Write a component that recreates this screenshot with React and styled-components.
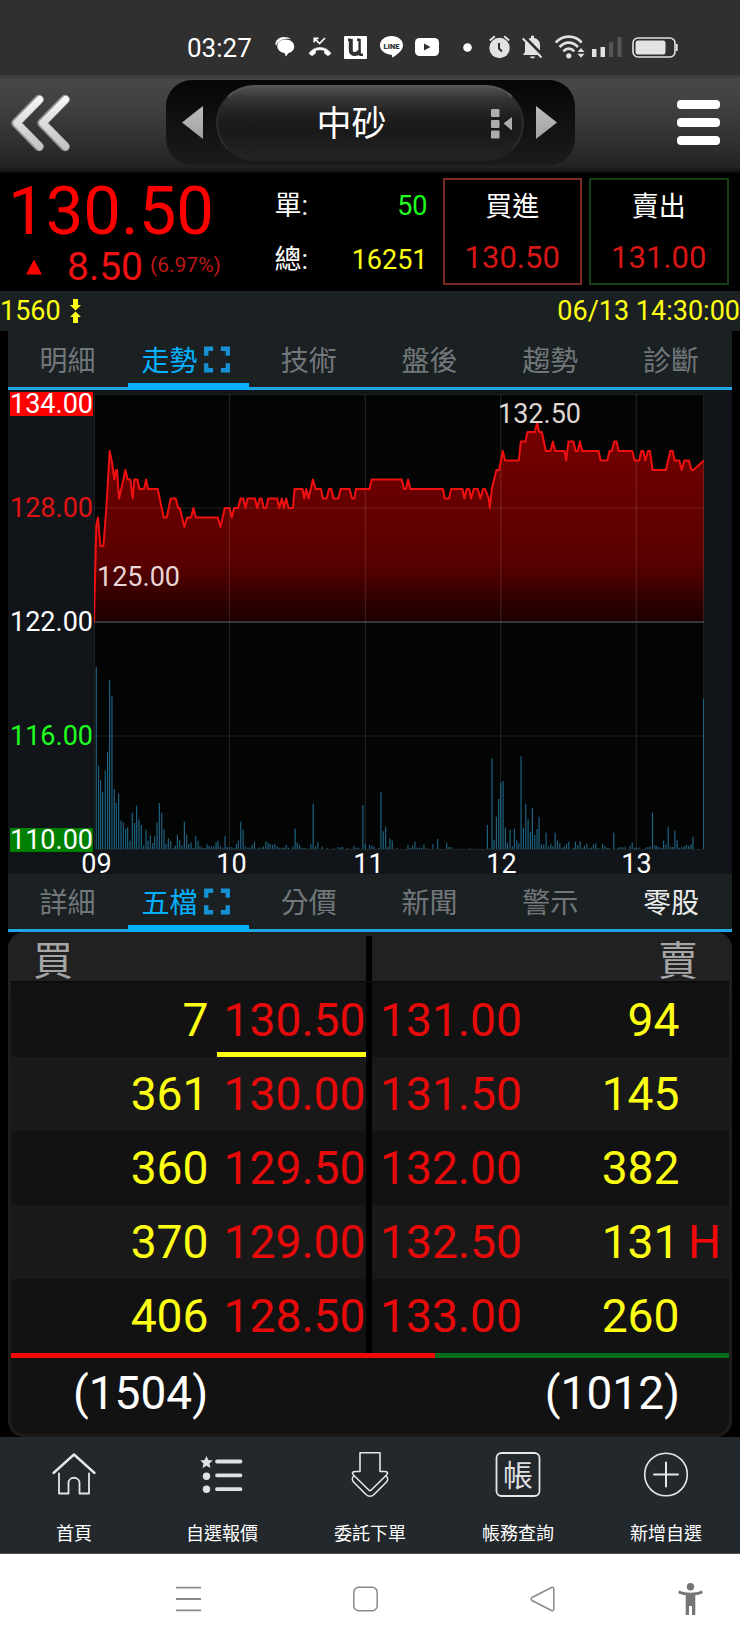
import React from "react";
import styled, { createGlobalStyle } from "styled-components";

const COLORS = {
  up: "#ff0000",
  price: "#e60a0a",
  down: "#1fff1f",
  volume: "#ffff14",
  accent: "#05b1ff",
  panel: "#1b2123",
};

const UNIT = 57; // chart units for one dollar
const PLOT_W = 1828;
const PLOT_H = 24 * UNIT;

// [x, price]
const PRICES = [
  [0, 122], [4, 125], [7, 127.1], [12, 127.5], [19, 126], [28, 126], [37, 128],
  [47, 131], [54, 130.4], [61, 129.5], [66, 130], [69, 130], [75, 128.5], [83, 129.1], [94, 130],
  [101, 129.5], [109, 129.5], [116, 128.5], [121, 129.5], [130, 129.5],
  [136, 129], [150, 129], [156, 129.5], [162, 129], [191, 129], [209, 127.5],
  [218, 127.5], [230, 128.5], [245, 128.5], [252, 128], [257, 128],
  [271, 127], [279, 127.5], [291, 127.5], [298, 128], [305, 127.5],
  [371, 127.5], [379, 127], [392, 128], [406, 128], [413, 127.5], [420, 128],
  [432, 128], [439, 128.5], [447, 128.5], [454, 128], [460, 128.5],
  [482, 128.5], [489, 128], [496, 128.5], [502, 128.5], [509, 128],
  [516, 128], [522, 128.5], [549, 128.5], [555, 128], [563, 128.5],
  [569, 128], [576, 128.5], [583, 128], [596, 128], [601, 129], [625, 129],
  [630, 128.5], [636, 129], [643, 128.5], [656, 129.5], [664, 129],
  [680, 129], [686, 128.5], [697, 128.5], [704, 129], [711, 129],
  [718, 128.5], [732, 128.5], [739, 129], [766, 129], [773, 128.5],
  [780, 128.5], [785, 129], [826, 129], [832, 129.5], [922, 129.5],
  [929, 129], [935, 129], [941, 129.5], [948, 129], [1046, 129],
  [1051, 128.5], [1064, 128.5], [1070, 129], [1104, 129], [1110, 128.5],
  [1117, 129], [1124, 129], [1130, 128.5], [1138, 129], [1150, 129],
  [1158, 128.5], [1166, 129], [1172, 129], [1183, 128.5], [1186, 128], [1192, 129],
  [1206, 130], [1214, 130], [1225, 131], [1232, 130.5], [1273, 130.5],
  [1279, 131.5], [1293, 131.5], [1299, 132], [1321, 132], [1328, 132.5],
  [1334, 132], [1342, 132], [1354, 131], [1368, 131], [1375, 131.5],
  [1382, 131], [1410, 131], [1415, 130.5], [1422, 131.5], [1437, 131.5],
  [1443, 131], [1450, 131], [1456, 131.5], [1463, 131], [1512, 131],
  [1518, 130.5], [1538, 130.5], [1545, 131], [1552, 131], [1559, 131.5],
  [1566, 131.5], [1572, 131], [1613, 131], [1620, 130.5], [1634, 130.5],
  [1640, 131], [1646, 131], [1652, 130.5], [1660, 131], [1666, 131],
  [1674, 130], [1714, 130], [1727, 131], [1734, 131], [1740, 130.5],
  [1754, 130.5], [1761, 130], [1769, 130.5], [1783, 130.5], [1790, 130],
  [1796, 130], [1828, 130.5],
];

// [x, bar height]
const VOLUMES = [
  [7, 546], [14, 250], [20, 206], [26, 170], [34, 236], [41, 292], [47, 506],
  [54, 458], [61, 180], [67, 138], [74, 166], [81, 85], [88, 80], [95, 60],
  [101, 66], [108, 25], [115, 109], [122, 78], [128, 130], [135, 88],
  [142, 72], [149, 11], [156, 58], [162, 25], [169, 41], [176, 18], [182, 38],
  [189, 80], [196, 138], [203, 109], [210, 59], [216, 16], [223, 32],
  [230, 24], [237, 2], [244, 10], [250, 43], [257, 26], [264, 11], [271, 82],
  [278, 43], [284, 15], [291, 20], [298, 4], [305, 39], [312, 25], [318, 8],
  [325, 4], [332, 3], [339, 14], [345, 9], [352, 7], [359, 9], [366, 20],
  [372, 25], [379, 8], [386, 4], [393, 40], [399, 6], [406, 6], [413, 6],
  [420, 3], [427, 15], [433, 26], [440, 82], [447, 58], [454, 8], [461, 4],
  [467, 4], [474, 13], [481, 22], [494, 4], [501, 4], [508, 8], [515, 23],
  [522, 19], [528, 15], [535, 13], [542, 15], [549, 8], [556, 4], [563, 4],
  [569, 4], [576, 12], [583, 4], [596, 8], [603, 61], [609, 19], [616, 13],
  [623, 4], [630, 3], [637, 2], [650, 15], [657, 136], [664, 8], [671, 21],
  [684, 7], [698, 3], [718, 2], [732, 6], [739, 5], [745, 6], [759, 3],
  [779, 9], [786, 4], [793, 4], [806, 132], [813, 15], [826, 13], [833, 11],
  [839, 7], [853, 3], [860, 170], [867, 53], [874, 67], [881, 6], [887, 31],
  [894, 25], [908, 2], [941, 13], [948, 3], [955, 10], [962, 22], [969, 4],
  [975, 4], [982, 4], [989, 14], [996, 2], [1016, 15], [1030, 30],
  [1057, 19], [1064, 6], [1071, 6], [1126, 2], [1179, 72], [1186, 2],
  [1193, 272], [1199, 28], [1206, 97], [1213, 150], [1219, 199], [1226, 204],
  [1233, 64], [1239, 19], [1247, 58], [1254, 8], [1260, 61], [1267, 26],
  [1273, 17], [1280, 278], [1287, 64], [1294, 135], [1301, 89], [1308, 52],
  [1314, 124], [1321, 42], [1328, 60], [1334, 97], [1341, 14], [1348, 14],
  [1355, 49], [1362, 8], [1369, 16], [1375, 8], [1382, 49], [1389, 25],
  [1396, 17], [1403, 4], [1410, 8], [1416, 15], [1423, 22], [1437, 4],
  [1443, 22], [1450, 12], [1457, 23], [1464, 4], [1470, 10], [1477, 16],
  [1484, 2], [1491, 5], [1497, 14], [1504, 17], [1511, 3], [1524, 16],
  [1531, 9], [1538, 4], [1544, 3], [1558, 49], [1571, 4], [1578, 6],
  [1585, 5], [1592, 7], [1606, 10], [1613, 20], [1620, 4], [1626, 4],
  [1633, 4], [1653, 4], [1660, 6], [1667, 7], [1674, 109], [1681, 10],
  [1687, 9], [1694, 6], [1701, 3], [1707, 25], [1714, 14], [1721, 67],
  [1728, 7], [1734, 6], [1741, 55], [1748, 26], [1755, 4], [1762, 6],
  [1769, 8], [1775, 13], [1782, 10], [1789, 14], [1795, 37], [1827, 451],
];

const BIDS = [
  { price: "130.50", qty: "7", last: true },
  { price: "130.00", qty: "361" },
  { price: "129.50", qty: "360" },
  { price: "129.00", qty: "370" },
  { price: "128.50", qty: "406" },
];

const ASKS = [
  { price: "131.00", qty: "94" },
  { price: "131.50", qty: "145" },
  { price: "132.00", qty: "382" },
  { price: "132.50", qty: "131", mark: "H" },
  { price: "133.00", qty: "260" },
];

const StatusIcons = () => (
  <>
    <Glyph $left={275} width="20" height="20" viewBox="0 0 20 20" fill="#fff">
      <path d="M.5 8C0 3 4.500 0 9 0c3 0 5.500.8 7 2.300C9.500.8 3.500 3 1.300 8.500z" />
      <path d="M10.500 2.600c5 0 8.700 2.800 8.700 6.900 0 3.500-2.500 5.700-5.600 6.500L10.800 19.500 9.500 16C5.500 15.500 2.300 13 2.300 9.300 2.300 5.300 6 2.600 10.500 2.600z" />
    </Glyph>
    <Glyph $left={308} width="24" height="20" viewBox="0 0 24 20">
      <path d="M1 16.500C6 8.500 18 8.500 23 16.500L20 18.800 16.500 16.300V13.500C13.500 12.600 10.500 12.600 7.500 13.500V16.300L4 18.800z" fill="#fff" stroke="#fff" strokeWidth=".6" strokeLinejoin="round" />
      <path d="M6.300 5.500V1.300H10.500M7 2l4.500 4.500L17 1" fill="none" stroke="#fff" strokeWidth="1.700" />
    </Glyph>
    <Glyph $left={344} width="23" height="23" viewBox="0 0 23 23">
      <rect width="23" height="23" rx="1" fill="#fff" />
      <path d="M6.800 3V14.500C6.800 19.500 14.800 19 14.800 14.500" fill="none" stroke="#303030" strokeWidth="4" />
      <path d="M15.600 3V19.500M4 3.800H7M13 3.800H16M15.500 18.800H19" fill="none" stroke="#303030" strokeWidth="2.400" />
    </Glyph>
    <Glyph $left={380} width="23" height="22" viewBox="0 0 23 22">
      <path d="M11.500 0C18 0 23 4 23 9.300c0 5-5 9-11 12.500.3-1.500.4-2.500-.6-3C5 18.500 0 14.500 0 9.300 0 4 5 0 11.500 0z" fill="#fff" />
      <text x="11.500" y="12.500" fontSize="7.500" fontWeight="900" fontFamily="Roboto, sans-serif" textAnchor="middle" fill="#303030">LINE</text>
    </Glyph>
    <Glyph $left={415} width="24" height="18" viewBox="0 0 24 18">
      <rect width="24" height="18" rx="4.500" fill="#fff" />
      <path d="M9 5.500L15.500 9 9 12.500z" fill="#303030" />
    </Glyph>
    <Glyph $left={463} width="9" height="9" viewBox="0 0 9 9">
      <circle cx="4.500" cy="4.500" r="4.300" fill="#fff" />
    </Glyph>
    <Glyph $left={489} width="21" height="24" viewBox="0 0 21 24">
      <circle cx="10.500" cy="13" r="10.200" fill="#e2e2e2" />
      <path d="M.8 5.500L5.800 1.200M20.200 5.500L15.200 1.200" stroke="#e2e2e2" strokeWidth="2" />
      <path d="M10 8v5.500l3 3" fill="none" stroke="#303030" strokeWidth="2" />
    </Glyph>
    <Glyph $left={522} width="21" height="24" viewBox="0 0 21 24">
      <path d="M3 17V10C3 6 5.500 3.500 9 3V.8h3V3c3.500.5 6 3 6 7v7l2 3H.8z" fill="#e2e2e2" />
      <path d="M8 21.500h5c-.5 2.500-4.500 2.500-5 0z" fill="#e2e2e2" />
      <path d="M2.500 2L21 20.500" stroke="#303030" strokeWidth="3" />
      <path d="M.8 3.500L19.500 22.500" stroke="#e2e2e2" strokeWidth="2" />
    </Glyph>
    <Glyph $left={555} width="30" height="24" viewBox="0 0 30 24">
      <g fill="none" stroke="#e2e2e2" strokeWidth="2.600">
        <path d="M.8 7.500C8-.3 19.500-.3 26.700 7.500" />
        <path d="M4.500 12c5.500-5.800 13-5.800 18.500 0" />
        <path d="M8.300 16.300c3.500-3.600 7.500-3.600 11 0" />
      </g>
      <circle cx="13.800" cy="20.800" r="2.600" fill="#e2e2e2" />
      <path d="M22.500 17l3.500-4 3.500 4zM22.500 18.800h7L26 22.800z" fill="#e2e2e2" />
    </Glyph>
    <Glyph $left={592} width="30" height="20" viewBox="0 0 30 20">
      <path d="M0 12h4.500v8H0zM8.500 10H13v10H8.500z" fill="#e2e2e2" />
      <path d="M17 5h4.200v15H17zM25.500 0h4v20h-4z" fill="#555" />
    </Glyph>
    <Glyph $left={632} width="46" height="21" viewBox="0 0 46 21">
      <rect x="1" y="1" width="42" height="19" rx="5" fill="none" stroke="#e2e2e2" strokeWidth="1.600" />
      <rect x="3.500" y="3.500" width="30" height="14" rx="2.500" fill="#e2e2e2" />
      <path d="M44.800 7v7" stroke="#e2e2e2" strokeWidth="1.800" />
    </Glyph>
  </>
);

const ExpandIcon = () => (
  <svg width="26" height="27" viewBox="0 0 27 27" fill="none" stroke="#1691d4" strokeWidth="4.500">
    <path d="M2.300 9.500V2.300h7.200M17.500 2.300h7.200v7.200M24.700 17.500v7.200h-7.200M9.500 24.700H2.300v-7.200" />
  </svg>
);

const TabBar = ({ items, active, bright, height }) => (
  <Tabs $height={height}>
    {items.map((item) => (
      <Tab key={item} $active={item === active} $bright={item === bright}>
        <span>{item}</span>
        {item === active && <ExpandIcon />}
      </Tab>
    ))}
  </Tabs>
);

const TrendChart = () => {
  const points = PRICES.map(([x, p]) => `${x},${(134 - p) * UNIT}`).join(" ");
  const half = PLOT_H / 2;

  return (
    <ChartPanel>
      <PriceAxis>
        <AxisLabel $bg="#ff0000">134.00</AxisLabel>
        <AxisLabel $color="#e01212">128.00</AxisLabel>
        <AxisLabel>122.00</AxisLabel>
        <AxisLabel $color={COLORS.down}>116.00</AxisLabel>
        <AxisLabel $bg="#008000">110.00</AxisLabel>
      </PriceAxis>
      <Plot>
        <svg width="610" height="456" viewBox={`0 0 ${PLOT_W} ${PLOT_H}`} preserveAspectRatio="none">
          <defs>
            <linearGradient id="fill" gradientUnits="userSpaceOnUse" x1="0" y1="86" x2="0" y2={half}>
              <stop offset="0" stopColor="#740000" />
              <stop offset="0.700" stopColor="#5a0000" />
              <stop offset="1" stopColor="#1a0000" />
            </linearGradient>
          </defs>
          <rect width={PLOT_W} height={PLOT_H} fill="#030504" />
          <polygon points={`${points} ${PLOT_W},${half} 0,${half}`} fill="url(#fill)" />
          <g stroke="#fff" strokeOpacity="0.120" strokeWidth="3.500">
            {[406, 813, 1219, 1625].map((x) => (
              <line key={x} x1={x} x2={x} y1="0" y2={PLOT_H} />
            ))}
            <line x1="0" x2={PLOT_W} y1={half / 2} y2={half / 2} />
            <line x1="0" x2={PLOT_W} y1={half * 1.5} y2={half * 1.5} />
            <rect x="1" y="1" width={PLOT_W - 2} height={PLOT_H - 3} fill="none" />
          </g>
          <line x1="0" x2={PLOT_W} y1={half} y2={half} stroke="#454a55" strokeWidth="4" />
          {VOLUMES.map(([x, h]) => (
            <rect key={x} x={x - 2} y={PLOT_H - h - 3} width="3.600" height={h} fill="#1f6280" />
          ))}
          <polyline points={points} fill="none" stroke="#f01010" strokeWidth="6" strokeLinejoin="round" />
        </svg>
        <Callout $x={3} $y={175.500}>125.00</Callout>
        <Callout $x={404} $y={12.500}>132.50</Callout>
      </Plot>
      <TimeAxis>
        {["09", "10", "11", "12", "13"].map((t) => (
          <span key={t}>{t}</span>
        ))}
      </TimeAxis>
    </ChartPanel>
  );
};

const OrderBook = () => (
  <Book>
    <BookHead>
      <span>買</span>
      <span>賣</span>
    </BookHead>
    <BookRows>
      {BIDS.map((bid, i) => (
        <BookRow key={bid.price} $odd={i % 2 === 1}>
          <Qty>{bid.qty}</Qty>
          <BidPrice $last={bid.last}>{bid.price}</BidPrice>
          <Divider />
          <AskPrice>{ASKS[i].price}</AskPrice>
          <Qty>{ASKS[i].qty}</Qty>
          <Mark>{ASKS[i].mark}</Mark>
        </BookRow>
      ))}
    </BookRows>
    <RatioBar>
      <Ratio $color="#f40808" style={{ flexGrow: 59 }} />
      <Ratio $color="#056b1c" style={{ flexGrow: 41 }} />
    </RatioBar>
    <Totals>
      <span>(1504)</span>
      <span>(1012)</span>
    </Totals>
  </Book>
);

const NAV = [
  {
    label: "首頁",
    icon: (
      <g fill="none" stroke="#e4e6e8" strokeWidth="1.800" strokeLinecap="round" strokeLinejoin="round">
        <path d="M2.500 21L23 2.500 43.500 21" strokeWidth="2.400" />
        <path d="M8 21.500V41.500H17.500V31c0-7 11-7 11 0V41.500H38V21.500" />
      </g>
    ),
  },
  {
    label: "自選報價",
    icon: (
      <g fill="#dfe2e4">
        <path d="M7.500 4l1.900 4.100 4.400.5-3.300 3 .9 4.400-3.900-2.200L3.600 16l.9-4.400-3.300-3 4.400-.5z" />
        <circle cx="7.500" cy="24.200" r="3.700" />
        <circle cx="7.500" cy="37.200" r="3.700" />
        <path d="M18 9.500H41.500M18 23.300H41.500M18 37.200H41.500" stroke="#dfe2e4" strokeWidth="3.800" strokeLinecap="round" />
      </g>
    ),
  },
  {
    label: "委託下單",
    icon: (
      <g fill="none" stroke="#e4e6e8" strokeWidth="1.600" strokeLinejoin="round">
        <path d="M13 .8H33V19.500H37.500C40.500 19.500 41.500 21 39.500 23L24 38.200Q23 39 22 38.200L6.500 23C4.500 21 5.500 19.500 8.500 19.500H13z" />
        <path d="M7 23.800C4.500 26.500 4.500 28 7 30.500L19 42.500Q23 46 27 42.500L39 30.500C41.500 28 41.500 26.500 39 23.800" />
      </g>
    ),
  },
  {
    label: "帳務查詢",
    icon: (
      <>
        <rect x="1.500" y="1" width="43" height="43" rx="5" fill="none" stroke="#e4e6e8" strokeWidth="1.800" />
        <text x="23" y="33.500" fontSize="30" textAnchor="middle" fill="#dcdee0">帳</text>
      </>
    ),
  },
  {
    label: "新增自選",
    icon: (
      <g fill="none" stroke="#e4e6e8" strokeWidth="1.600" strokeLinecap="round">
        <circle cx="23" cy="22.500" r="21.300" />
        <path d="M23 10.500V34.500M11 22.500H35" strokeWidth="2" />
      </g>
    ),
  },
];

const App = () => {
  return (
    <>
      <GlobalStyle />
      <Screen>
        <StatusBar>
          <Clock>03:27</Clock>
          <StatusIcons />
        </StatusBar>

        <Header>
          <svg width="62" height="60" viewBox="0 0 62 60" fill="none" strokeLinecap="round" strokeLinejoin="round">
            <defs>
              <linearGradient id="chevron" x1="0" y1="0" x2="0" y2="1">
                <stop offset="0" stopColor="#f6f6f6" />
                <stop offset="1" stopColor="#c4c4c4" />
              </linearGradient>
            </defs>
            <path d="M30 6.500L7 30 30 53.500M56 6.500L33 30 56 53.500" stroke="#959595" strokeWidth="9.500" />
            <path d="M30 6.500L7 30 30 53.500M56 6.500L33 30 56 53.500" stroke="url(#chevron)" strokeWidth="7" transform="translate(0.700 0)" />
          </svg>
          <Selector>
            <Arrow $dir="left" />
            <Pill>
              <span>中砂</span>
              <svg width="22" height="32" viewBox="0 0 22 32" fill="#adadad">
                <rect x="0" y="1" width="8.500" height="8" rx="1" />
                <rect x="0" y="12" width="8.500" height="8" rx="1" />
                <rect x="0" y="22.500" width="8.500" height="8" rx="1" />
                <path d="M12.500 15.500L21 9v13.500z" />
              </svg>
            </Pill>
            <Arrow $dir="right" />
          </Selector>
          <MenuButton>
            <i />
            <i />
            <i />
          </MenuButton>
        </Header>

        <Quote>
          <LastPrice>
            <Big>130.50</Big>
            <Change>
              <UpMark />
              <Diff>8.50</Diff>
              <Percent>(6.97%)</Percent>
            </Change>
          </LastPrice>
          <Volume>
            <VolumeRow $color={COLORS.down}>
              <span>單:</span>
              <b>50</b>
            </VolumeRow>
            <VolumeRow $color={COLORS.volume}>
              <span>總:</span>
              <b>16251</b>
            </VolumeRow>
          </Volume>
          <TradeBox $border="#7c2b28">
            <span>買進</span>
            <b>130.50</b>
          </TradeBox>
          <TradeBox $border="#173f14">
            <span>賣出</span>
            <b>131.00</b>
          </TradeBox>
        </Quote>

        <InfoStrip>
          <Code>
            1560
            <svg width="11" height="24" viewBox="0 0 11 24" fill="#ffff14">
              <path d="M3 0h5v6h3l-5.500 5.500L0 6h3zM3 24h5v-6h3l-5.500-5.500L0 18h3z" />
            </svg>
          </Code>
          <span>06/13 14:30:00</span>
        </InfoStrip>

        <Body>
          <TabBar items={["明細", "走勢", "技術", "盤後", "趨勢", "診斷"]} active="走勢" height={59} />
          <TrendChart />
          <TabBar items={["詳細", "五檔", "分價", "新聞", "警示", "零股"]} active="五檔" bright="零股" height={58} />
          <OrderBook />
        </Body>

        <BottomNav>
          {NAV.map(({ label, icon }) => (
            <NavItem key={label}>
              <svg width="46" height="46" viewBox="0 0 46 46">
                {icon}
              </svg>
              {label}
            </NavItem>
          ))}
        </BottomNav>

        <SystemNav>
          <svg width="25" height="26" viewBox="0 0 25 26" stroke="#8a8a8a" strokeWidth="1.800">
            <path d="M0 1.700H25M0 13H25M0 24.300H25" />
          </svg>
          <svg width="25" height="26" viewBox="0 0 25 26" fill="none" stroke="#8a8a8a" strokeWidth="1.500">
            <rect x="0.800" y="1.200" width="23.400" height="23.600" rx="5" />
          </svg>
          <svg width="25" height="26" viewBox="0 0 25 26" fill="none" stroke="#8a8a8a" strokeWidth="1.500" strokeLinejoin="round">
            <path d="M2 11.500L21.500 1.500Q23.800.8 23.800 3V23Q23.800 25.200 21.500 24.500L2 14.500Q.3 13 2 11.500z" />
          </svg>
          <svg width="25" height="32" viewBox="0 0 25 32" fill="#757575">
            <circle cx="12.500" cy="3.800" r="3.700" />
            <path d="M1 7.500C8 10.500 17 10.500 24 7.500L24.800 10.300C22 11.500 20 12 17.300 12.300V32H14V23H11V32H7.700V12.300C5 12 3 11.500.2 10.300z" />
          </svg>
        </SystemNav>
      </Screen>
    </>
  );
};

const GlobalStyle = createGlobalStyle`
  body {
    margin: 0;
    background: #000;
  }
  * {
    box-sizing: border-box;
  }
  svg {
    display: block;
    flex: none;
  }
  b {
    font-weight: 400;
  }
`;

const Screen = styled.div`
  width: 740px;
  height: 1644px;
  display: flex;
  flex-direction: column;
  overflow: hidden;
  background: #000;
  color: #fff;
  font-family: Roboto, "Noto Sans CJK TC", sans-serif;
  font-size: 28px;
  line-height: 1;
  white-space: nowrap;
`;

const StatusBar = styled.div`
  height: 75px;
  flex: none;
  display: grid;
  align-items: center;
  padding-top: 19px;
  background: #303030;
`;

const Clock = styled.div`
  grid-area: 1 / 1;
  padding-top: 1px;
  padding-left: 187px;
  font-size: 26px;
`;

const Glyph = styled.svg`
  grid-area: 1 / 1;
  margin-left: ${(props) => props.$left}px;
`;

const Header = styled.header`
  height: 98px;
  flex: none;
  display: flex;
  align-items: center;
  justify-content: space-between;
  padding: 0 20px 3px 9px;
  background: linear-gradient(#3a3a3a 0, #474747 5px, #414141 30%, #303030 68%, #222 94%, #101010 99%, #000);
`;

const Selector = styled.div`
  width: 409px;
  height: 85px;
  display: flex;
  align-items: center;
  justify-content: space-between;
  margin-left: 95px;
  margin-right: auto;
  padding: 0 18px 0 16px;
  border-radius: 26px;
  background: linear-gradient(#060606, #131313 60%, #1b1b1b);
`;

const Arrow = styled.div`
  width: 21px;
  height: 33px;
  background: linear-gradient(#bdbdbd, #a2a2a2);
  clip-path: ${(props) =>
    props.$dir === "left"
      ? "polygon(0 50%, 100% 0, 100% 100%)"
      : "polygon(0 0, 100% 50%, 0 100%)"};
`;

const Pill = styled.div`
  width: 308px;
  height: 76px;
  display: flex;
  align-items: center;
  justify-content: flex-end;
  gap: 104px;
  padding-top: 2px;
  padding-right: 9px;
  border-radius: 38px;
  border: 2px solid #2c2c2c;
  border-top-color: #555;
  border-bottom-color: #222;
  background: linear-gradient(#505050, #333 18%, #1e1e1e 42%, #191919 60%, #232323);
  font-size: 35px;

  span {
    padding-top: 2px;
  }
`;

const MenuButton = styled.div`
  display: grid;
  gap: 9px;

  i {
    width: 43px;
    height: 8.700px;
    border-radius: 4px;
    background: #fff;
  }
`;

const Quote = styled.section`
  height: 118px;
  flex: none;
  display: flex;
  align-items: flex-start;
  padding-top: 5px;
  background: #000;
`;

const LastPrice = styled.div`
  width: 274.500px;
  padding-left: 8px;
  color: ${COLORS.up};
`;

const Big = styled.div`
  font-size: 67px;
  line-height: 67px;
`;

const Change = styled.div`
  display: flex;
  align-items: center;
  height: 44px;
`;

const UpMark = styled.div`
  width: 16px;
  height: 15px;
  margin: 0 25px 0 18px;
  background: ${COLORS.up};
  clip-path: polygon(50% 0, 100% 100%, 0 100%);
`;

const Diff = styled.div`
  width: 83px;
  font-size: 39px;
  color: #f01212;
`;

const Percent = styled.div`
  font-size: 21px;
  padding-bottom: 3px;
  color: #bd1616;
`;

const Volume = styled.div`
  width: 153px;
  margin-right: 15px;
  padding-top: 2px;
`;

const VolumeRow = styled.div`
  display: flex;
  justify-content: space-between;
  align-items: center;
  height: 53.500px;
  font-size: 27px;
  color: ${(props) => props.$color};

  span {
    color: #fff;
  }
`;

const TradeBox = styled.div`
  width: 139.500px;
  height: 107px;
  margin-right: 7px;
  padding-top: 12px;
  border: 2px solid ${(props) => props.$border};
  text-align: center;
  font-size: 27px;

  span {
    display: block;
    height: 50px;
    line-height: 31px;
  }

  b {
    display: block;
    font-size: 31px;
    line-height: 32px;
    color: #d81616;
  }
`;

const InfoStrip = styled.div`
  height: 40px;
  flex: none;
  display: flex;
  justify-content: space-between;
  align-items: center;
  background: ${COLORS.panel};
  color: ${COLORS.volume};
  font-size: 27px;
`;

const Code = styled.div`
  display: flex;
  align-items: center;
  gap: 9px;
`;

const Body = styled.main`
  width: 724px;
  height: 1106px;
  flex: none;
  margin: 0 auto;
  display: flex;
  flex-direction: column;
`;

const Tabs = styled.nav`
  height: ${(props) => props.$height}px;
  flex: none;
  display: grid;
  grid-template-columns: 120px 121px repeat(4, 1fr);
  border-bottom: 3px solid #1ea7e6;
  background: ${COLORS.panel};
`;

const Tab = styled.div`
  display: flex;
  align-items: center;
  justify-content: center;
  gap: 6px;
  margin-bottom: -3px;
  padding-top: ${(props) => (props.$active ? 4 : 2)}px;
  padding-right: ${(props) => (props.$active ? 6 : 1)}px;
  border-bottom: ${(props) => (props.$active ? `7px solid ${COLORS.accent}` : "0")};
  color: ${(props) =>
    props.$active ? COLORS.accent : props.$bright ? "#e9ebec" : "#71777a"};

  span {
    padding-top: ${(props) => (props.$active ? 5 : 0)}px;
  }
`;

const ChartPanel = styled.section`
  height: 484px;
  flex: none;
  display: grid;
  grid-template-columns: 86px 610px;
  grid-template-rows: 456px 24px;
  padding-top: 4px;
  background: #11151a;
`;

const PriceAxis = styled.div`
  display: grid;
  grid-template-rows: 104px 113.500px 114.500px 104px 24px;
  justify-items: end;
  margin: -2px 1px 0 0;
`;

const AxisLabel = styled.div`
  height: 24px;
  font-size: 27px;
  line-height: 25px;
  color: ${(props) => props.$color || "#fff"};
  background: ${(props) => props.$bg || "none"};
`;

const Plot = styled.div`
  position: relative;
`;

const Callout = styled.div`
  position: absolute;
  left: ${(props) => props.$x}px;
  top: ${(props) => props.$y - 8}px;
  font-size: 27px;
  line-height: 30px;
  color: rgba(255, 245, 240, 0.880);
`;

const TimeAxis = styled.div`
  grid-column: 2;
  display: flex;
  margin-left: -65px;
  font-size: 27px;
  line-height: 28px;

  span {
    width: 135.900px;
    text-align: center;
  }

  span:nth-child(3) {
    padding-left: 4px;
  }
`;

const Book = styled.section`
  height: 505px;
  display: flex;
  flex-direction: column;
  padding: 0 3px;
  border-radius: 16px;
  background: linear-gradient(#212121 0 50px, #1d1d1d 80px);
`;

const BookHead = styled.div`
  height: 51px;
  flex: none;
  display: flex;
  justify-content: space-between;
  padding: 10px 31px 0 22px;
  border-bottom: 2px solid #0c0c0c;
  background: linear-gradient(#000, #000) 355px 4px / 6px 100% no-repeat;
  font-size: 40px;
  color: #a5a5a5;
`;

const BookRows = styled.div`
  height: 370px;
  display: grid;
  grid-template-rows: repeat(5, 1fr);
`;

const BookRow = styled.div`
  display: grid;
  grid-template-columns: 206px 149px 6px 147px 1fr 41px;
  background: ${(props) => (props.$odd ? "#191919" : "#121212")};
  font-size: 46.200px;
  line-height: 75px;
`;

const Qty = styled.div`
  height: 74px;
  text-align: right;
  padding-right: 8.500px;
  color: ${COLORS.volume};
`;

const BidPrice = styled.div`
  height: 74px;
  padding-right: 0.500px;
  text-align: right;
  color: ${COLORS.price};
  ${(props) => props.$last && `box-shadow: inset 0 -5px ${COLORS.volume};`}
`;

const AskPrice = styled.div`
  height: 74px;
  padding-left: 8px;
  color: ${COLORS.price};
`;

const Divider = styled.div`
  background: #000;
`;

const Mark = styled.div`
  height: 74px;
  color: #f20808;
`;

const RatioBar = styled.div`
  height: 5px;
  flex: none;
  display: flex;
`;

const Ratio = styled.div`
  flex-basis: 0;
  background: ${(props) => props.$color};
`;

const Totals = styled.div`
  flex: 1;
  display: flex;
  justify-content: space-between;
  padding: 0 49px 0 62px;
  margin-bottom: 3px;
  border-radius: 0 0 14px 14px;
  background: #121212;
  font-size: 46px;
  line-height: 70px;
`;

const BottomNav = styled.nav`
  height: 117px;
  flex: none;
  display: grid;
  grid-template-columns: repeat(5, 1fr);
  border-bottom: 1px solid #4d5255;
  background: #23282c;
`;

const NavItem = styled.div`
  display: flex;
  flex-direction: column;
  align-items: center;
  gap: 27px;
  padding-top: 15px;
  font-size: 18px;
`;

const SystemNav = styled.div`
  flex: 1;
  display: flex;
  align-items: center;
  padding-left: 176px;
  background: #fff;

  svg + svg {
    margin-left: 152px;
  }

  svg:last-child {
    margin-left: 123px;
  }
`;

export default App;
